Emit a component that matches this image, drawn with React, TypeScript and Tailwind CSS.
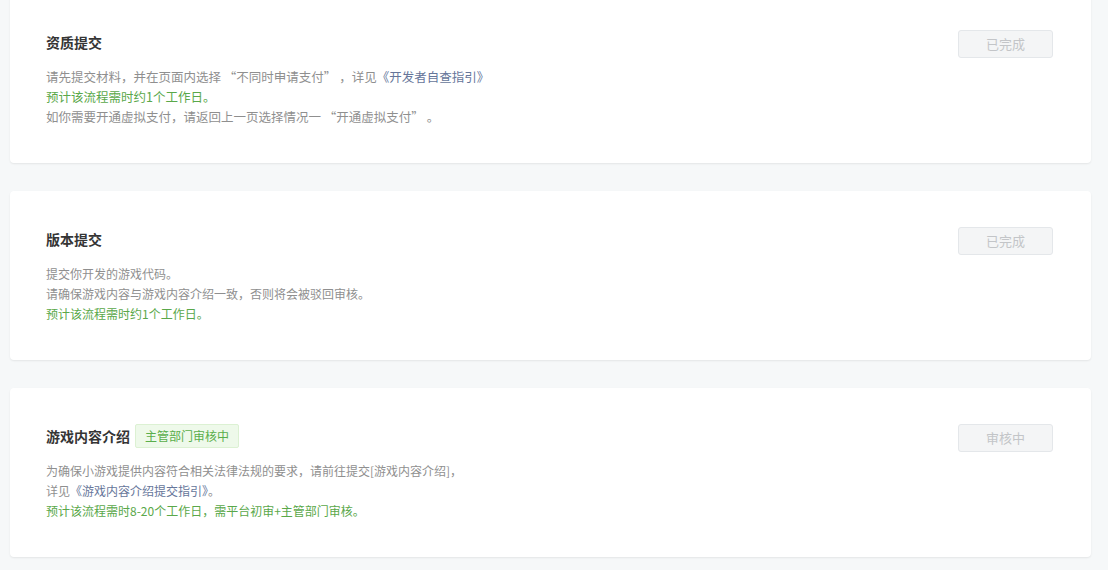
import React from "react";

const font = { fontFamily: '"Noto Sans CJK SC", "Noto Sans", sans-serif' };

// full-width curly quotes, as the reference renders them
const Lq = () => <span className="inline-block w-[12.5px] text-right">“</span>;
const Rq = () => <span className="inline-block w-[12.5px] text-left">”</span>;

function StatusButton({ label }: { label: string }) {
  return (
    <button className="h-[28px] w-[95px] shrink-0 rounded-[3px] border border-[#e4e7ea] bg-[#f4f5f6] text-[13px] text-[#c3c5c8]">
      {label}
    </button>
  );
}

function Card({
  title,
  tag,
  button,
  wide,
  children,
}: {
  title: string;
  tag?: string;
  button: string;
  wide?: boolean;
  children: React.ReactNode;
}) {
  return (
    <div className="flex h-[169px] items-start justify-between rounded-[4px] bg-white pl-[36px] pr-[38px] pt-[36px] shadow-[0_1px_2px_rgba(0,0,0,0.08)]">
      <div>
        <div className="flex h-[24px] items-center gap-[5px]">
          <h3 className="text-[14px] font-bold leading-[24px] text-[#353535]">{title}</h3>
          {tag && (
            <span className="flex h-[24px] items-center rounded-[2px] border border-[#dcf1d3] bg-[#eef9ea] px-[9px] text-[12px] text-[#5aae4b]">
              {tag}
            </span>
          )}
        </div>
        <div className={(wide ? "text-[12.5px]" : "text-[12px]") + " mt-[13px] leading-[20px] text-[#8f8f8f]"}>
          {children}
        </div>
      </div>
      <StatusButton label={button} />
    </div>
  );
}

const green = "text-[#5aa84a]";
const link = "text-[#66769a]";

export default function App() {
  return (
    <div className="h-[570px] overflow-hidden bg-[#f6f8f9]" style={font}>
      <div className="-mt-[6px] flex flex-col gap-[28px] pl-[10px] pr-[17px]">
        <Card title="资质提交" button="已完成" wide>
          <p>
            请先提交材料，并在页面内选择 <Lq />不同时申请支付<Rq /> ，详见<span className={link}>《开发者自查指引》</span>
          </p>
          <p className={green}>预计该流程需时约1个工作日。</p>
          <p>
            如你需要开通虚拟支付，请返回上一页选择情况一 <Lq />开通虚拟支付<Rq /> 。
          </p>
        </Card>
        <Card title="版本提交" button="已完成">
          <p>提交你开发的游戏代码。</p>
          <p>请确保游戏内容与游戏内容介绍一致，否则将会被驳回审核。</p>
          <p className={green}>预计该流程需时约1个工作日。</p>
        </Card>
        <Card title="游戏内容介绍" tag="主管部门审核中" button="审核中">
          <p>为确保小游戏提供内容符合相关法律法规的要求，请前往提交[游戏内容介绍]，</p>
          <p>
            详见<span className={link}>《游戏内容介绍提交指引》</span>。
          </p>
          <p className={green}>预计该流程需时8-20个工作日，需平台初审+主管部门审核。</p>
        </Card>
      </div>
    </div>
  );
}
